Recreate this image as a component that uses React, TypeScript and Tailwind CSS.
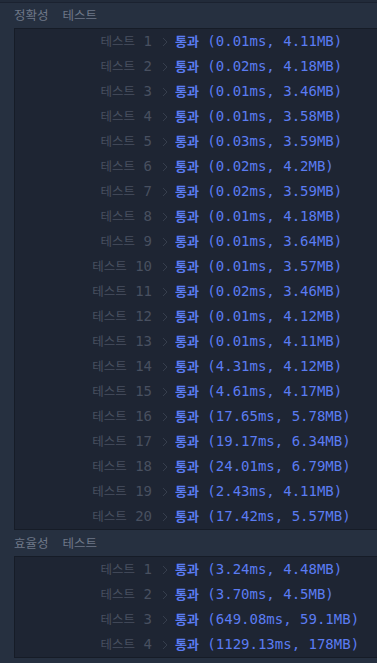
const accuracy = [
  "(0.01ms, 4.11MB)",
  "(0.02ms, 4.18MB)",
  "(0.01ms, 3.46MB)",
  "(0.01ms, 3.58MB)",
  "(0.03ms, 3.59MB)",
  "(0.02ms, 4.2MB)",
  "(0.02ms, 3.59MB)",
  "(0.01ms, 4.18MB)",
  "(0.01ms, 3.64MB)",
  "(0.01ms, 3.57MB)",
  "(0.02ms, 3.46MB)",
  "(0.01ms, 4.12MB)",
  "(0.01ms, 4.11MB)",
  "(4.31ms, 4.12MB)",
  "(4.61ms, 4.17MB)",
  "(17.65ms, 5.78MB)",
  "(19.17ms, 6.34MB)",
  "(24.01ms, 6.79MB)",
  "(2.43ms, 4.11MB)",
  "(17.42ms, 5.57MB)",
];

const efficiency = [
  "(3.24ms, 4.48MB)",
  "(3.70ms, 4.5MB)",
  "(649.08ms, 59.1MB)",
  "(1129.13ms, 178MB)",
];

const mono = {
  fontFamily: '"DejaVu Sans Mono", "Noto Sans CJK KR", monospace',
};

const Chevron = () => (
  <svg width="6" height="10" viewBox="0 0 6 10" className="ml-[10px] mr-[7px] shrink-0">
    <path d="M1 1 L5 5 L1 9" fill="none" stroke="#363e4d" strokeWidth="1" />
  </svg>
);

const Row = ({ n, result }: { n: number; result: string }) => (
  <div className="flex items-center h-[25px] whitespace-pre text-[14px]">
    <div className="w-[137px] text-right text-[#485060]">
      <span className="text-[12.5px]">테스트</span> {n}
    </div>
    <Chevron />
    <div className="text-[#5b7cf2]">
      <span className="text-[13px] font-semibold">통과</span> {result}
    </div>
  </div>
);

const Section = ({ head, rows }: { head: string; rows: string[] }) => (
  <div>
    <div
      className="h-[25px] flex items-center gap-[14px] pl-[14px] text-[12.5px] text-[#6f7888]"
      style={{ fontFamily: '"Noto Sans CJK KR", sans-serif' }}
    >
      <span>{head}</span>
      <span>테스트</span>
    </div>
    <div className="ml-[14px] bg-[#1e2533] border-y border-l border-[#161c27]">
      {rows.map((r, i) => (
        <Row key={i} n={i + 1} result={r} />
      ))}
    </div>
  </div>
);

export default function App() {
  return (
    <div className="w-[377px] h-[663px] bg-[#263040] overflow-hidden" style={mono}>
      <div className="h-[3px] border-b border-[#1b2230] bg-[#222b3a]" />
      <Section head="정확성" rows={accuracy} />
      <div className="h-[1px]" />
      <Section head="효율성" rows={efficiency} />
    </div>
  );
}
